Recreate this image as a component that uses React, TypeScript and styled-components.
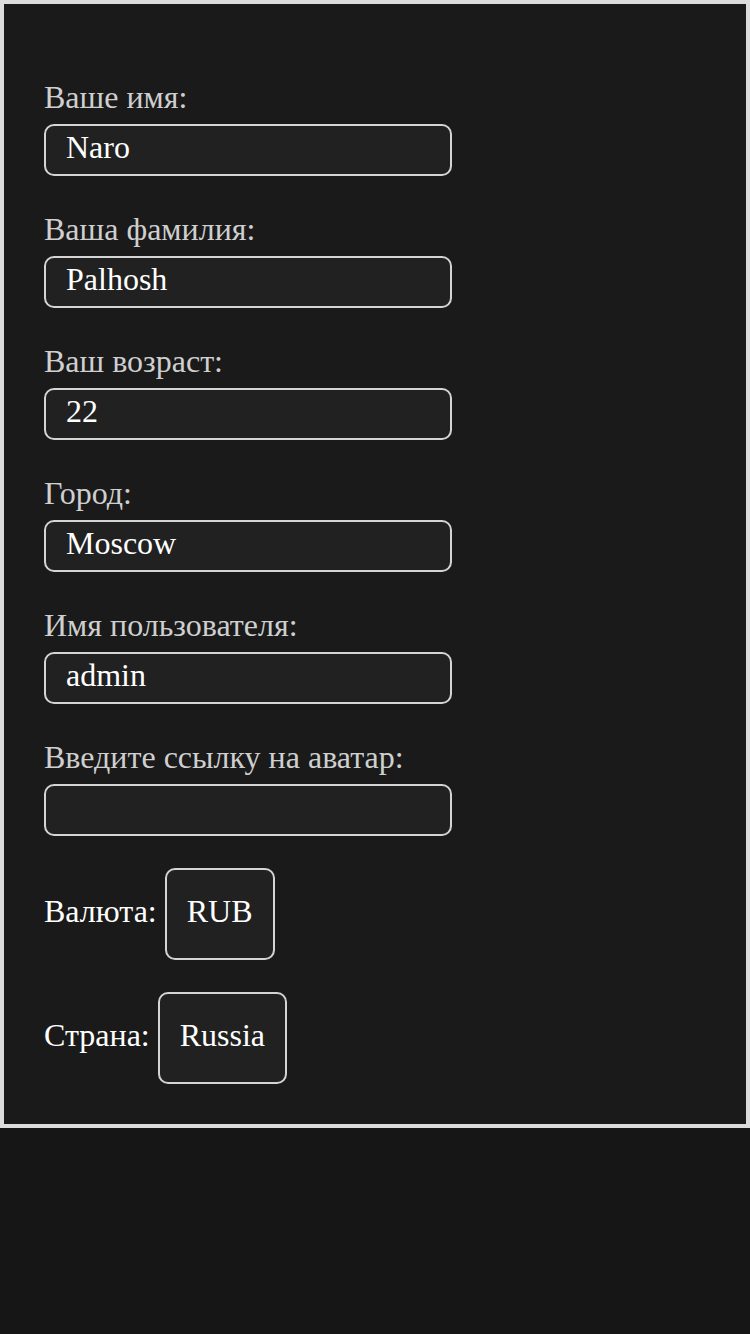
import React from "react";
import styled, { createGlobalStyle } from "styled-components";

const Global = createGlobalStyle`
  html, body {
    margin: 0;
    padding: 0;
    background: #161616;
    font-family: "Liberation Serif", "Times New Roman", serif;
  }
  * { box-sizing: border-box; }
`;

const Card = styled.form`
  width: 750px;
  border: 4px solid #dcdcdc;
  background: #1a1a1a;
  padding: 40px 40px 40px;
  display: flex;
  flex-direction: column;
`;

const Field = styled.div`
  display: flex;
  flex-direction: column;
  align-items: flex-start;
  margin-top: 35px;
`;

const Label = styled.label`
  display: block;
  font-size: 32px;
  line-height: 37px;
  color: #cfcfcf;
  margin-bottom: 8px;
`;

const Input = styled.input`
  width: 408px;
  height: 52px;
  border: 2px solid #d4d4d4;
  border-radius: 10px;
  background: #212121;
  color: #ffffff;
  font-family: "Liberation Serif", "Times New Roman", serif;
  font-size: 32px;
  padding: 0 20px 5px;
  outline: none;
`;

const SelectRow = styled.div`
  display: flex;
  align-items: center;
  gap: 8px;
  margin-top: 32px;
`;

const RowLabel = styled.span`
  font-size: 32px;
  line-height: 37px;
  color: #ffffff;
  margin-bottom: 6px;
`;

const SelectBox = styled.div`
  height: 92px;
  padding: 0 20px 6px;
  border: 2px solid #d4d4d4;
  border-radius: 10px;
  background: #212121;
  color: #ffffff;
  font-size: 32px;
  display: flex;
  align-items: center;
  justify-content: center;
`;

const fields = [
  { label: "Ваше имя:", value: "Naro" },
  { label: "Ваша фамилия:", value: "Palhosh" },
  { label: "Ваш возраст:", value: "22" },
  { label: "Город:", value: "Moscow" },
  { label: "Имя пользователя:", value: "admin" },
  { label: "Введите ссылку на аватар:", value: "" },
];

export default function App() {
  return (
    <>
      <Global />
      <Card onSubmit={(e) => e.preventDefault()}>
        {fields.map((f) => (
          <Field key={f.label}>
            <Label>{f.label}</Label>
            <Input defaultValue={f.value} />
          </Field>
        ))}
        <SelectRow>
          <RowLabel>Валюта:</RowLabel>
          <SelectBox>RUB</SelectBox>
        </SelectRow>
        <SelectRow>
          <RowLabel>Страна:</RowLabel>
          <SelectBox>Russia</SelectBox>
        </SelectRow>
      </Card>
    </>
  );
}
